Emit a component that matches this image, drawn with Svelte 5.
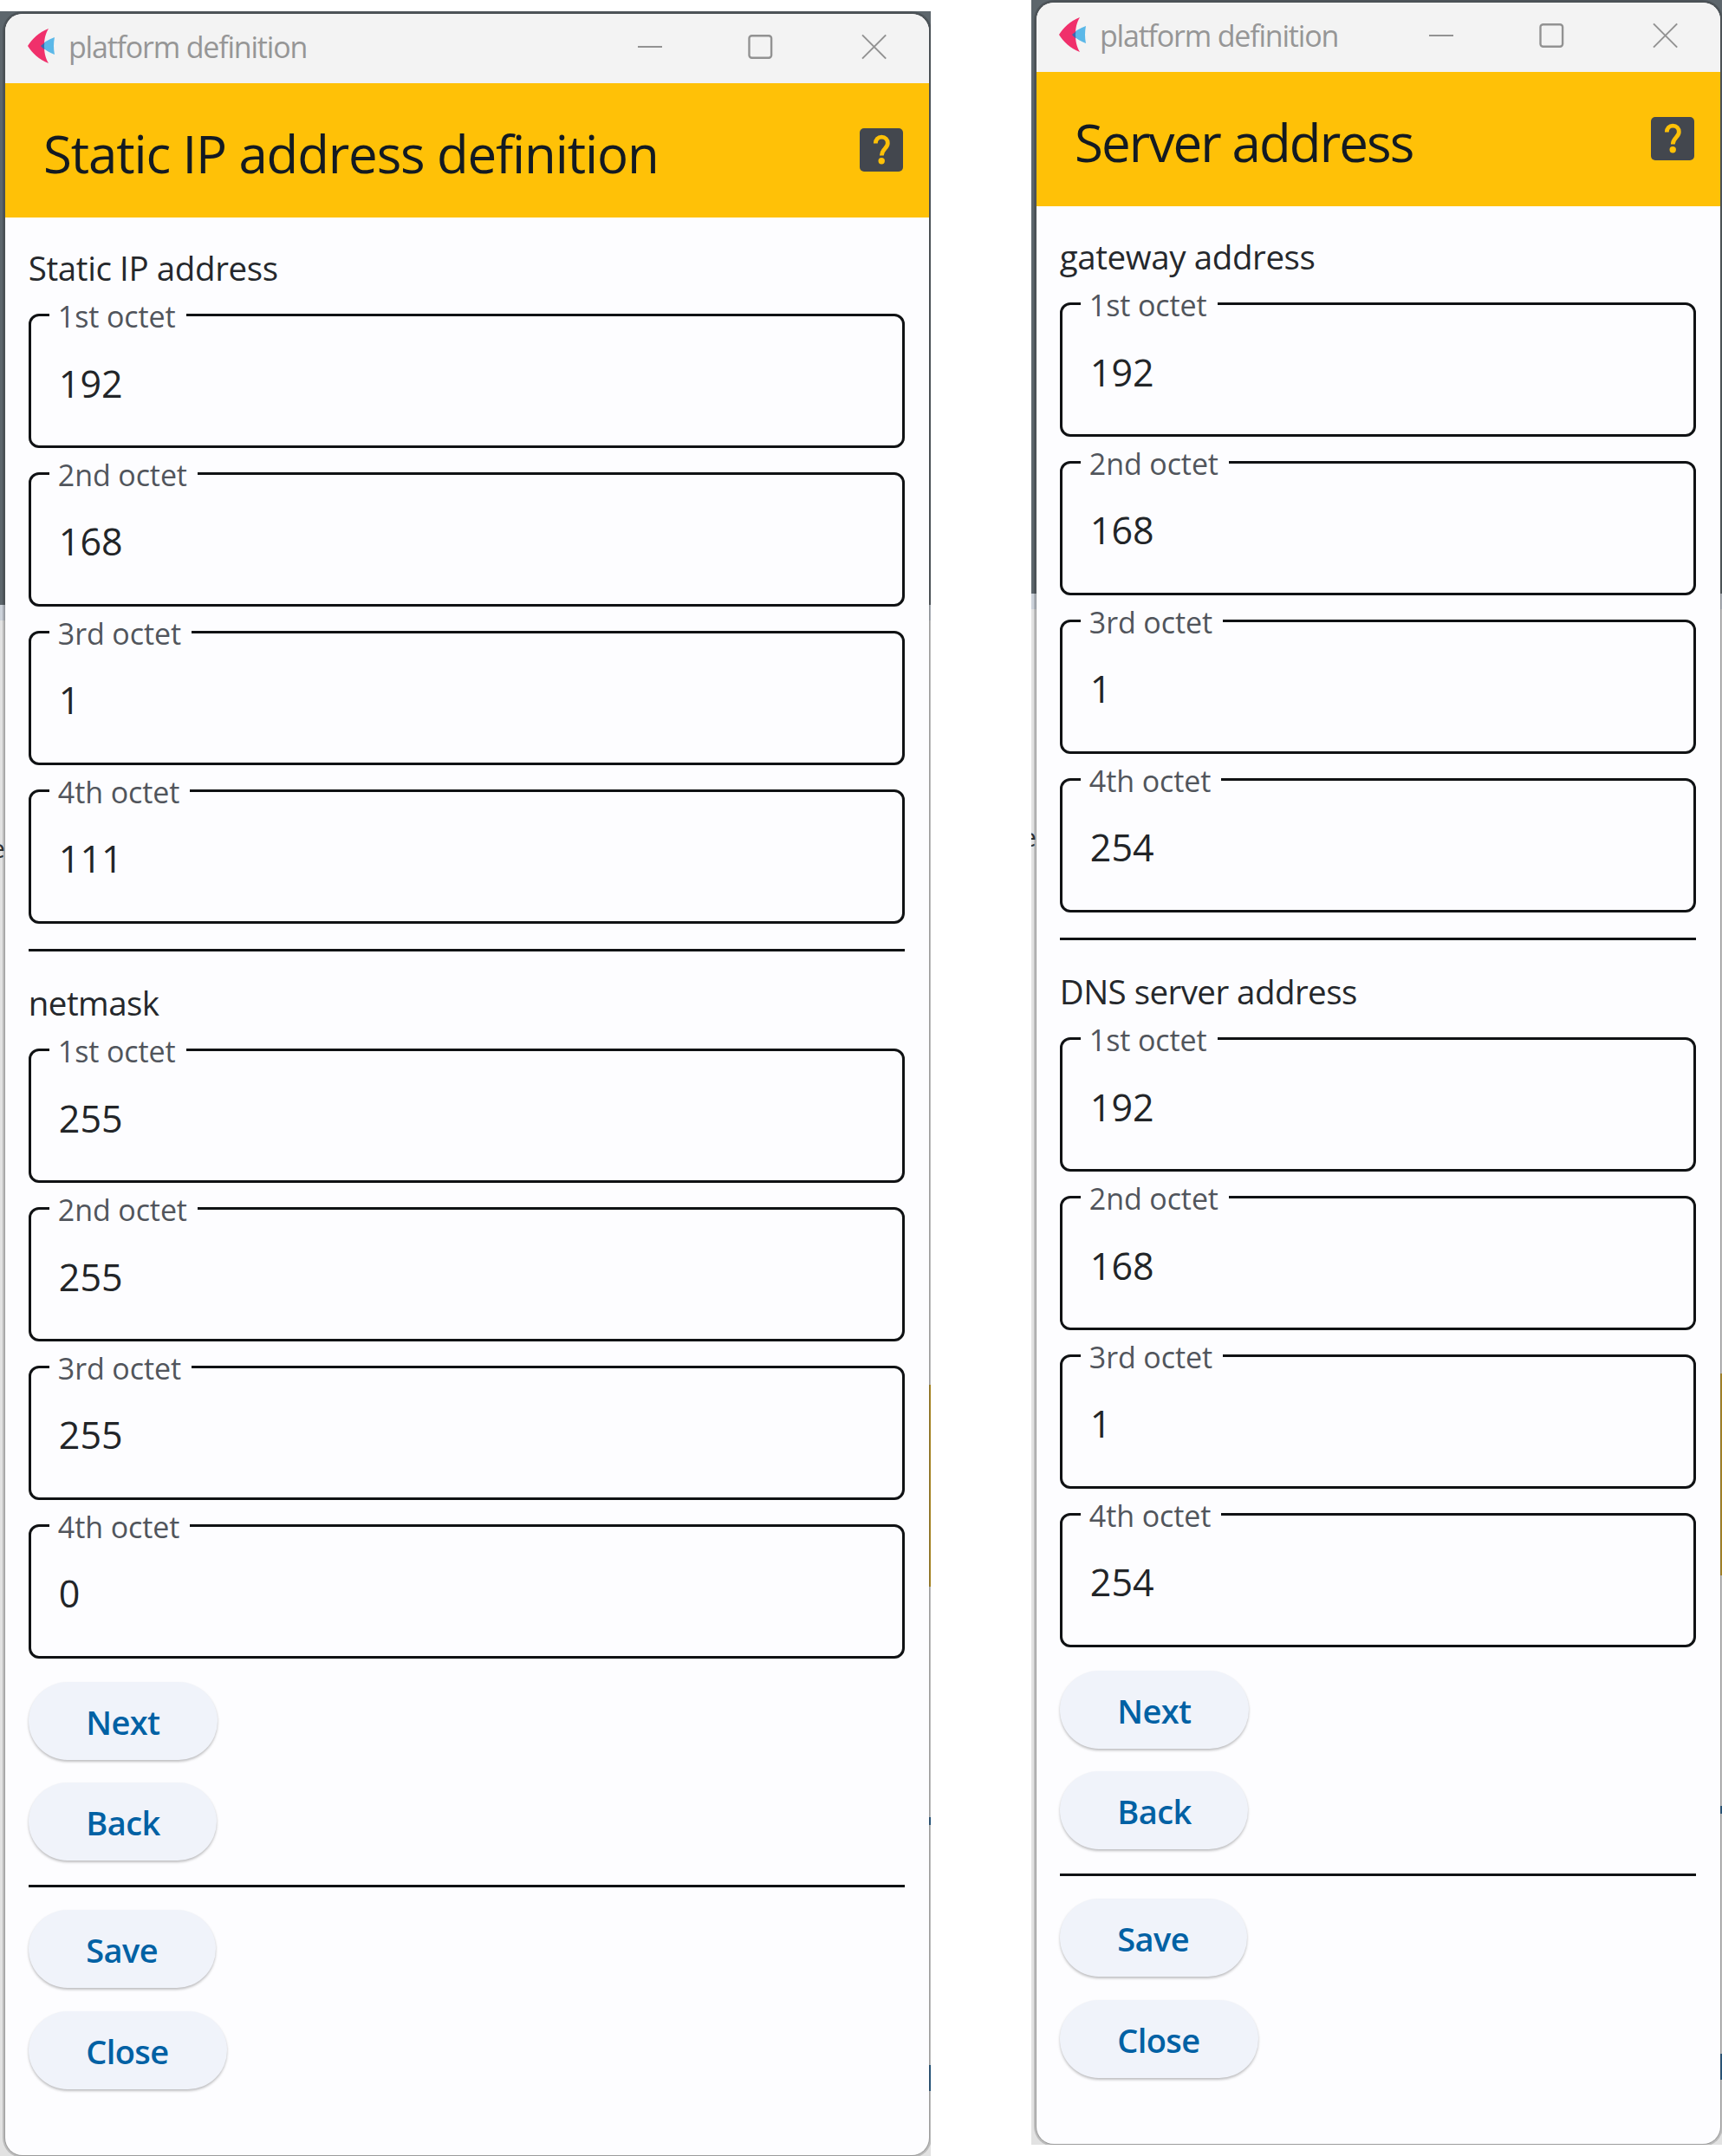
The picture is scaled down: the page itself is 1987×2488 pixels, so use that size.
<script>
  const windows = [
    {
      id: 'ip',
      title: 'Static IP address definition',
      groups: [
        { name: 'Static IP address', octets: ['192', '168', '1', '111'] },
        { name: 'netmask', octets: ['255', '255', '255', '0'] },
      ],
    },
    {
      id: 'server',
      title: 'Server address',
      groups: [
        { name: 'gateway address', octets: ['192', '168', '1', '254'] },
        { name: 'DNS server address', octets: ['192', '168', '1', '254'] },
      ],
    },
  ];
  const ordinals = ['1st', '2nd', '3rd', '4th'];
</script>

<main>
  {#each windows as win (win.id)}
    <div class="backdrop {win.id}">
      <!-- letter of the page behind the window, peeking out at its left edge -->
      <i class="peek" aria-hidden="true">e</i>
      <section class="window">
        <header class="titlebar">
          <svg class="logo" width="32" height="40" viewBox="0 0 32 40">
            <path d="M31 10Q20 14 15 20Q21 26 31 30Q29 20 31 10Z" fill="#5bb8e8" />
            <path d="M24 0C13 4 5 12 0 20C5 28 13 36 24 40C20 33 19 27 19 20C19 13 20 7 24 0Z" fill="#f0306b" />
            <path d="M19.3 16.5Q17 18 15 20Q17 22.5 19.3 24.2Q18.7 20 19.3 16.5Z" fill="#3b66b0" />
          </svg>
          <span class="apptitle">platform definition</span>
          <svg class="controls" width="290" height="30" viewBox="0 0 290 30" fill="none" stroke="#929292" stroke-width="2">
            <path d="M1 15H29" />
            <rect x="129.5" y="2.2" width="25.6" height="25.6" rx="3" stroke-width="2.4" />
            <path d="M260 1.4L287.2 28.6M287.2 1.4L260 28.6" />
          </svg>
        </header>
        <div class="appbar">
          <h1>{win.title}</h1>
          <svg class="help" width="50" height="50" viewBox="0 0 50 50">
            <rect width="50" height="50" rx="5" fill="#43474e" />
            <path d="M18.3 17.5C18.5 13 21 10.2 25.3 10.2C29.5 10.2 32.3 13 32.3 17.2C32.3 23.5 25.3 24 25.3 31.5" fill="none" stroke="#ffc107" stroke-width="4.8" />
            <circle cx="25.2" cy="37.8" r="3.7" fill="#ffc107" />
          </svg>
        </div>
        <div class="content">
          {#each win.groups as group, g}
            {#if g > 0}<hr class="mid" />{/if}
            <h2>{group.name}</h2>
            {#each group.octets as value, i}
              <fieldset>
                <legend>{ordinals[i]} octet</legend>
                <span>{value}</span>
              </fieldset>
            {/each}
          {/each}
          <div class="actions">
            <button class="next">Next</button>
            <button class="back">Back</button>
          </div>
          <hr />
          <div class="actions last">
            <button class="save">Save</button>
            <button class="close">Close</button>
          </div>
        </div>
      </section>
    </div>
  {/each}
</main>

<style>
  :global(body) { margin: 0; background: #fff; }
  main {
    display: flex;
    justify-content: space-between;
    align-items: flex-start;
    width: 1987px;
    height: 2488px;
    overflow: hidden;
    font-family: "Open Sans", "Noto Sans", sans-serif;
  }
  .backdrop {
    position: relative;
    box-sizing: border-box;
    height: 2475px;
    padding: 3px 2px 1px 5.5px;
    overflow: hidden;
    background:
      linear-gradient(#0000 0 1585px, #c9a02c 1585px 1818px, #0000 1818px 2084px, #2f6793 2084px 2093px, #0000 2093px 2370px, #2f6793 2370px 2400px, #0000 2400px) right / 2px 100% no-repeat,
      linear-gradient(#5d666c 0 685px, #ccd2da 685px 703px, #e2e2e2 703px);
  }
  .ip { width: 1074px; margin-top: 13px; }
  .server { width: 797px; }
  .peek {
    position: absolute;
    left: -11px;
    top: 946px;
    font: 400 30px/40px "Open Sans", sans-serif;
    color: #333;
  }
  .window {
    position: relative;
    box-sizing: border-box;
    height: 100%;
    border-radius: 20px;
    overflow: hidden;
    background: #fdfdff;
    box-shadow: 0 0 0 1px rgba(60, 60, 60, 0.25), 0 0 0 3px rgba(0, 0, 0, 0.17);
  }
  .titlebar {
    display: flex;
    align-items: center;
    height: 80px;
    box-sizing: border-box;
    padding: 0 47px 4px 26px;
    background: #f3f3f3;
  }
  .logo { margin-bottom: 2px; }
  .apptitle {
    margin-left: 15.5px;
    font-size: 34px;
    line-height: 46px;
    letter-spacing: -1.2px;
    color: #969696;
    white-space: nowrap;
  }
  .controls { margin-left: auto; }
  .appbar {
    display: flex;
    align-items: center;
    justify-content: space-between;
    height: 155px;
    box-sizing: border-box;
    padding: 5px 30px 0 44.5px;
    background: #ffc107;
  }
  .help { margin-bottom: 6px; }
  h1 {
    margin: 0;
    padding-top: 1px;
    font-size: 60px;
    font-weight: 400;
    line-height: 80px;
    letter-spacing: -1.15px;
    color: #131a22;
    white-space: nowrap;
  }
  .server h1 { letter-spacing: -1.9px; }
  .content { padding: 31.5px 28px 0 27.3px; }
  h2 {
    margin: 0;
    height: 61.6px;
    font-size: 38.5px;
    line-height: 52px;
    font-weight: 400;
    letter-spacing: -0.4px;
    color: #25282c;
  }
  .mid + h2 { letter-spacing: -0.55px; }
  fieldset {
    box-sizing: border-box;
    height: 173.2px;
    margin: 0 0 9.7px;
    padding: 0 32px;
    min-width: 0;
    border: 3px solid #101214;
    border-radius: 12px;
  }
  legend {
    margin-left: -11px;
    padding: 3px 12px 0 10px;
    font-size: 34px;
    line-height: 36px;
    letter-spacing: -0.1px;
    color: #51555c;
  }
  span { display: block; }
  fieldset span { font-size: 43px; line-height: 58px; margin-top: 30.5px; color: #222528; }
  hr { height: 3px; margin: 0; border: 0; background: #101214; }
  .mid { margin: 29.3px 0 32.4px; }
  .actions {
    display: flex;
    flex-direction: column;
    align-items: flex-start;
    gap: 26.3px;
    padding: 17.3px 0 27.3px;
  }
  .last { padding-top: 26.9px; }
  button {
    box-sizing: border-box;
    height: 90px;
    padding: 0 0 0 66.5px;
    border: 0;
    border-radius: 45px;
    font: 600 38px/92px "Open Sans", sans-serif;
    letter-spacing: -0.6px;
    text-align: left;
    color: #0061a4;
    background: #f0f3fa;
    box-shadow: 0 2px 3px rgba(0, 0, 0, 0.25);
  }
  .next { width: 218px; }
  .back { width: 217px; }
  .save { width: 216px; }
  .close { width: 229px; }
</style>
